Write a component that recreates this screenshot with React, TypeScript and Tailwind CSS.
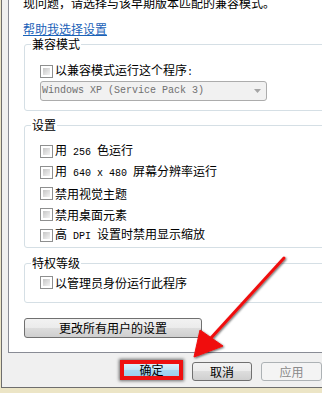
import React from 'react';

const Mono: React.FC<{ children: React.ReactNode }> = ({ children }) => (
  <span className="font-['Liberation_Mono',monospace] text-[10px] whitespace-pre">{children}</span>
);

const CheckBox: React.FC = () => (
  <span className="block w-[13px] h-[13px] shrink-0 border border-[#8e8f8f] bg-white p-[2px]">
    <span className="block w-full h-full bg-linear-to-br from-[#c6c6c6] to-[#f4f4f4]" />
  </span>
);

const CheckRow: React.FC<{ children: React.ReactNode; className?: string }> = ({
  children,
  className = 'h-[21px]',
}) => (
  <div className={`ml-[15px] flex items-center gap-[2px] ${className}`}>
    <CheckBox />
    <span className="whitespace-pre">{children}</span>
  </div>
);

const Group: React.FC<{ title: string; className?: string; children: React.ReactNode }> = ({
  title,
  className = '',
  children,
}) => (
  <fieldset className={`ml-[1px] border border-[#d5dfe5] rounded-[3px] ${className}`}>
    <legend className="ml-[6px] px-[1px] leading-[12px]">{title}</legend>
    {children}
  </fieldset>
);

const settings: React.ReactNode[] = [
  <>用<Mono> 256 </Mono>色运行</>,
  <>用<Mono> 640 x 480 </Mono>屏幕分辨率运行</>,
  <>禁用视觉主题</>,
  <>禁用桌面元素</>,
  <>高<Mono> DPI </Mono>设置时禁用显示缩放</>,
];

const winButton =
  'h-[19px] rounded-[3px] border border-[#707070] bg-[linear-gradient(#f2f2f2_0%,#ebebeb_50%,#dddddd_50%,#cfcfcf_100%)] flex items-center justify-center';

export default function App() {
  return (
    <div className="relative w-[322px] h-[393px] overflow-hidden bg-[#ece5c6] font-['Noto_Sans_CJK_SC',sans-serif] text-[12px] leading-[12px] text-black">
      <div className="ml-[1px] h-[388px] border-l border-b border-[#6e6e6e] bg-[#f0f0f0] flex flex-col">
        {/* tab page */}
        <div className="ml-[6px] -mt-[20px] w-[340px] shrink-0 border border-[#898c95] bg-white pl-[14px] pr-[16px] pt-[16px] pb-[14px]">
          <p className="whitespace-nowrap">现问题，请选择与该早期版本匹配的兼容模式。</p>
          <p className="mt-[14px]">
            <span className="text-[#1a62b8] underline underline-offset-[1px] decoration-[#1a62b8]">帮助我选择设置</span>
          </p>

          <Group title="兼容模式" className="mt-[3px] pb-[9px]">
            <CheckRow className="mt-[14px] h-[14px]">
              以兼容模式运行这个程序<Mono>:</Mono>
            </CheckRow>
            <div className="ml-[15px] mt-[3px] w-[227px] h-[20px] rounded-[3px] border border-[#acacac] bg-[#f1f1f1] flex items-center justify-between pl-[1px] pr-[5px] text-[#707070]">
              <Mono>Windows XP (Service Pack 3)</Mono>
              <svg width="7" height="4" viewBox="0 0 7 4">
                <path d="M0 0h7L3.5 4z" fill="#a5a5a5" />
              </svg>
            </div>
          </Group>

          <Group title="设置" className="mt-[8px] pb-[1px]">
            <div className="mt-[10px]">
              {settings.map((s, i) => (
                <CheckRow key={i}>{s}</CheckRow>
              ))}
            </div>
          </Group>

          <Group title="特权等级" className="mt-[9px] pb-[9px]">
            <CheckRow className="mt-[3px] h-[21px]">以管理员身份运行此程序</CheckRow>
          </Group>

          <button className={`${winButton} mt-[15px] ml-[1px] w-[178px] h-[20px]`}>更改所有用户的设置</button>
        </div>

        {/* dialog buttons */}
        <div className="mt-[9px] pl-[118px] flex gap-[9px] shrink-0">
          <div className="w-[74px] h-[20px] -mt-[2px] border-[4px] border-[#ee1111] shadow-[0_0_3px_1px_rgba(0,0,0,0.55)] bg-[linear-gradient(#dcf0fb_0%,#c2e4f6_50%,#a9d8f1_50%,#9dd0ee_100%)] flex items-center justify-center">
            确定
          </div>
          <button className={`${winButton} w-[72px]`}>取消</button>
          <button className="w-[73px] h-[19px] rounded-[3px] border border-[#adb2b5] bg-[#f4f4f4] text-[#8a8a8a] flex items-center justify-center">
            应用
          </button>
        </div>
      </div>

      {/* red arrow annotation */}
      <svg className="absolute inset-0 pointer-events-none" width="322" height="393" viewBox="0 0 322 393">
        <defs>
          <filter id="sh" x="-20%" y="-20%" width="140%" height="140%">
            <feDropShadow dx="1" dy="1" stdDeviation="1" floodColor="#000" floodOpacity="0.6" />
          </filter>
        </defs>
        <g filter="url(#sh)" fill="#f01010" stroke="#f01010">
          <line x1="284" y1="258" x2="210" y2="339" strokeWidth="3" strokeLinecap="round" />
          <path d="M194 357 L200 330 L223 346 Z" strokeWidth="1" strokeLinejoin="round" />
        </g>
      </svg>
    </div>
  );
}
